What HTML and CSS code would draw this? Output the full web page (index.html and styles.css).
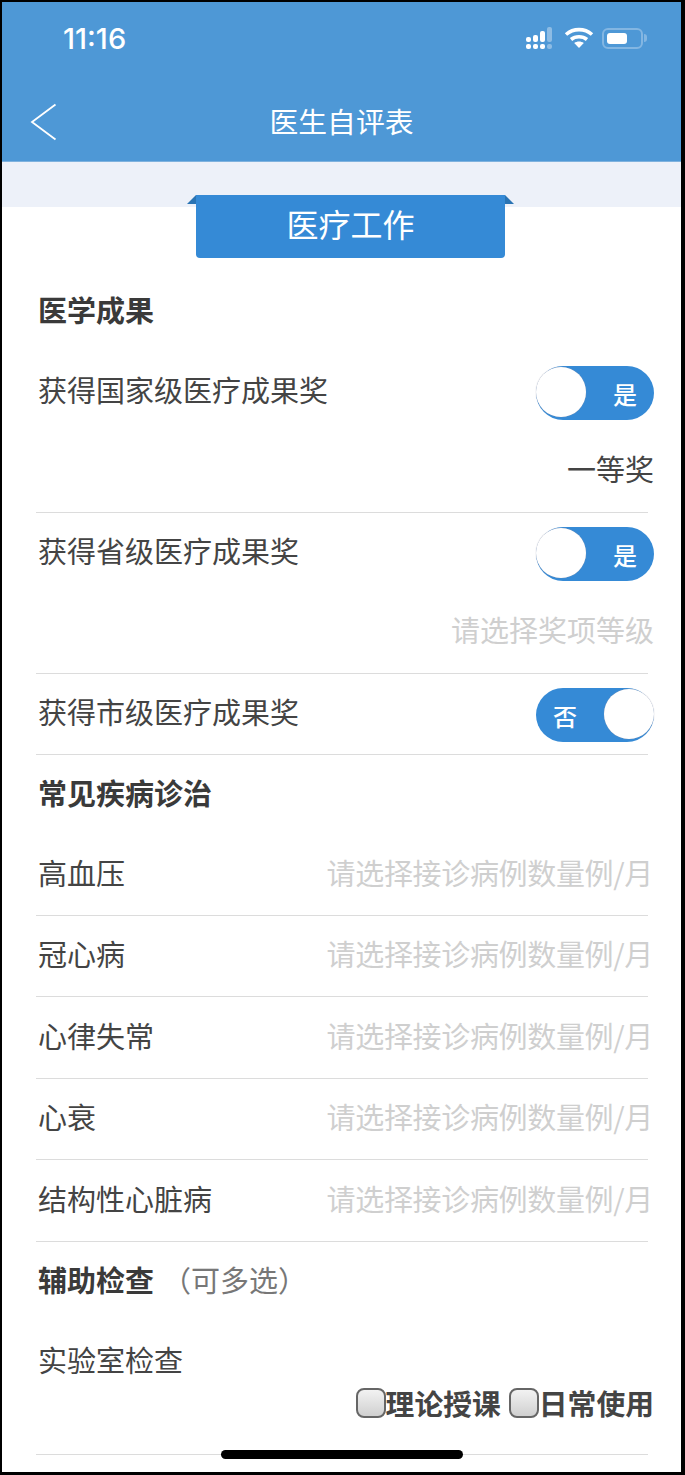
FILE: index.html
```html
<!DOCTYPE html>
<html lang="zh-CN">
<head>
    <meta charset="UTF-8">
    <meta name="viewport" content="width=device-width, initial-scale=1.0">
    <title>医生自评表</title>
    <link rel="stylesheet" href="styles.css">
</head>
<body>
    <div class="phone">
        <header class="topbar">
            <div class="status">
                <span class="time">11:16</span>
                <div class="status-icons">
                    <svg width="30" height="24" viewBox="0 0 30 24">
                        <g fill="#fff">
                            <rect x="1" y="11" width="5" height="5" rx="2"/>
                            <rect x="1" y="18" width="5" height="5" rx="2"/>
                            <rect x="8" y="9" width="5" height="7" rx="2"/>
                            <rect x="8" y="18" width="5" height="5" rx="2"/>
                            <rect x="15" y="5" width="5" height="11" rx="2"/>
                            <rect x="15" y="18" width="5" height="5" rx="2"/>
                        </g>
                        <g fill="#8dbce4">
                            <rect x="22" y="1" width="5" height="15" rx="2"/>
                            <rect x="22" y="18" width="5" height="5" rx="2"/>
                        </g>
                    </svg>
                    <svg class="wifi" width="30" height="22" viewBox="0 0 30 22">
                        <path d="M2 7.500C9.500 1 20.500 1 28 7.500M7 12.500C11.500 8.800 18.500 8.800 23 12.500" fill="none" stroke="#fff" stroke-width="3.600"/>
                        <path d="M15 21L10.200 16C13 14 17 14 19.800 16Z" fill="#fff"/>
                    </svg>
                    <div class="battery"><div class="battery-fill"></div></div>
                </div>
            </div>
            <div class="navbar">
                <svg class="back" width="28" height="38" viewBox="0 0 28 38">
                    <path d="M25.500 1.500L2 19L25.500 36.500" fill="none" stroke="#fff" stroke-width="1.800"/>
                </svg>
                <span class="nav-title">医生自评表</span>
            </div>
        </header>

        <div class="band"></div>
        <div class="ribbon-wrap">
            <div class="ribbon">医疗工作</div>
        </div>

        <main class="form">
            <div class="section-title first">医学成果</div>

            <div class="row row-tall">
                <div class="row-top">
                    <span>获得国家级医疗成果奖</span>
                    <div class="switch on"><span class="knob"></span><span class="switch-text">是</span></div>
                </div>
                <div class="row-value">一等奖</div>
            </div>
            <div class="row row-tall">
                <div class="row-top">
                    <span>获得省级医疗成果奖</span>
                    <div class="switch on"><span class="knob"></span><span class="switch-text">是</span></div>
                </div>
                <div class="row-value hint">请选择奖项等级</div>
            </div>
            <div class="row row-short">
                <div class="row-top">
                    <span>获得市级医疗成果奖</span>
                    <div class="switch off"><span class="switch-text">否</span><span class="knob"></span></div>
                </div>
            </div>

            <div class="section-title">常见疾病诊治</div>

            <div class="row row-pick"><span>高血压</span><span class="hint">请选择接诊病例数量例/月</span></div>
            <div class="row row-pick"><span>冠心病</span><span class="hint">请选择接诊病例数量例/月</span></div>
            <div class="row row-pick"><span>心律失常</span><span class="hint">请选择接诊病例数量例/月</span></div>
            <div class="row row-pick"><span>心衰</span><span class="hint">请选择接诊病例数量例/月</span></div>
            <div class="row row-pick"><span>结构性心脏病</span><span class="hint">请选择接诊病例数量例/月</span></div>

            <div class="section-title">辅助检查<span class="section-note">（可多选）</span></div>

            <div class="row row-check">
                <div class="check-label">实验室检查</div>
                <div class="checks">
                    <span class="box"></span><span>理论授课</span>
                    <span class="box second"></span><span>日常使用</span>
                </div>
            </div>
        </main>

        <div class="home-bar"></div>
    </div>
</body>
</html>
```

FILE: styles.css
```css
* {
    box-sizing: border-box;
}

html, body {
    margin: 0;
    padding: 0;
    background: #000;
}

.phone {
    position: relative;
    width: 685px;
    height: 1475px;
    overflow: hidden;
    background: #fff;
    border-style: solid;
    border-color: #000;
    border-width: 2px 4px 3px 2px;
    font-family: "Noto Sans CJK SC", "Noto Sans", sans-serif;
    font-size: 29px;
    color: #444;
}

.topbar {
    height: 160px;
    background: #4e98d6;
    color: #fff;
    border-bottom: 1px solid #7fb2de;
}

.status {
    height: 72px;
    padding: 15px 38px 0 61px;
    display: flex;
    justify-content: space-between;
    align-items: flex-start;
}

.time {
    font-family: "Inter", sans-serif;
    font-size: 29px;
    font-weight: 500;
    line-height: 44px;
}

.status-icons {
    display: flex;
    align-items: center;
    height: 42px;
    gap: 9px;
}

.battery {
    position: relative;
    width: 41px;
    height: 21px;
    margin-left: -1px;
    padding: 3px;
    border: 2px solid #83b6e2;
    border-radius: 6px;
}

.battery::after {
    content: "";
    position: absolute;
    right: -6px;
    top: 4px;
    width: 3px;
    height: 8px;
    background: #83b6e2;
    border-radius: 0 3px 3px 0;
}

.battery-fill {
    width: 20px;
    height: 100%;
    background: #fff;
    border-radius: 3px;
}

.navbar {
    position: relative;
    height: 87px;
    display: flex;
    align-items: center;
    justify-content: center;
}

.back {
    position: absolute;
    left: 28px;
    top: 29px;
}

.nav-title {
    font-size: 28.8px;
    line-height: 1;
    position: relative;
    top: 4px;
}

.band {
    height: 45px;
    background: #edf1f9;
}

.ribbon-wrap {
    position: relative;
    height: 63px;
}

.ribbon {
    position: absolute;
    left: 194px;
    top: -12px;
    width: 309px;
    height: 63px;
    background: #358ad6;
    border-radius: 0 0 4px 4px;
    color: #fff;
    font-size: 32px;
    line-height: 57px;
    text-align: center;
}

.ribbon::before,
.ribbon::after {
    content: "";
    position: absolute;
    top: 0;
    width: 0;
    height: 0;
    border-bottom: 9px solid #2a74b4;
}

.ribbon::before {
    left: -9px;
    border-left: 9px solid transparent;
}

.ribbon::after {
    right: -9px;
    border-right: 9px solid transparent;
}

.form {
    padding: 0 33px 0 34px;
}

.section-title {
    height: 79px;
    padding-left: 2px;
    font-weight: 700;
    line-height: 75px;
    color: #3a3a3a;
}

.section-title.first {
    height: 82px;
    line-height: 78px;
}

.section-note {
    margin-left: 8px;
    font-weight: 400;
    color: #777;
}

.row {
    border-bottom: 1.500px solid #dcdcdc;
    padding-left: 2px;
}

.row-tall {
    height: 161px;
}

.row-short {
    height: 81px;
}

.row-top {
    height: 82px;
    display: flex;
    justify-content: space-between;
    align-items: center;
    margin-right: -6px;
}

.row-top > span {
    position: relative;
    top: -4px;
}

.row-value {
    margin-right: -6px;
    margin-top: 13px;
    text-align: right;
    line-height: 42px;
}

.hint {
    color: #cfcfcf;
}

.switch {
    width: 118px;
    height: 54px;
    border-radius: 27px;
    background: #358ad6;
    color: #fff;
    font-size: 24px;
    font-weight: 500;
    display: flex;
    align-items: center;
    justify-content: space-between;
}

.switch.on {
    padding-right: 17px;
}

.switch.off {
    padding-left: 17px;
}

.switch .knob {
    width: 50px;
    height: 50px;
    margin-bottom: 3px;
    border-radius: 50%;
    background: #fff;
    box-shadow: 0 0 1px #99a;
}

.row-pick {
    height: 81.500px;
    display: flex;
    justify-content: space-between;
    align-items: center;
    padding-bottom: 5px;
}

.row-pick .hint {
    margin-right: -5px;
    letter-spacing: -0.33px;
}

.row-check {
    height: 134px;
}

.check-label {
    height: 60px;
    line-height: 76px;
}

.checks {
    display: flex;
    justify-content: flex-end;
    align-items: center;
    margin-right: -6px;
    height: 44px;
    font-weight: 700;
    font-size: 28.8px;
    color: #444;
}

.box {
    width: 30px;
    height: 30px;
    border: 2px solid #666;
    border-radius: 8px;
    background: linear-gradient(#f2f2f2, #d0d0d0);
}

.box.second {
    margin-left: 8px;
}

.home-bar {
    position: absolute;
    left: 219px;
    bottom: 13px;
    width: 242px;
    height: 9px;
    border-radius: 5px;
    background: #000;
}
```
